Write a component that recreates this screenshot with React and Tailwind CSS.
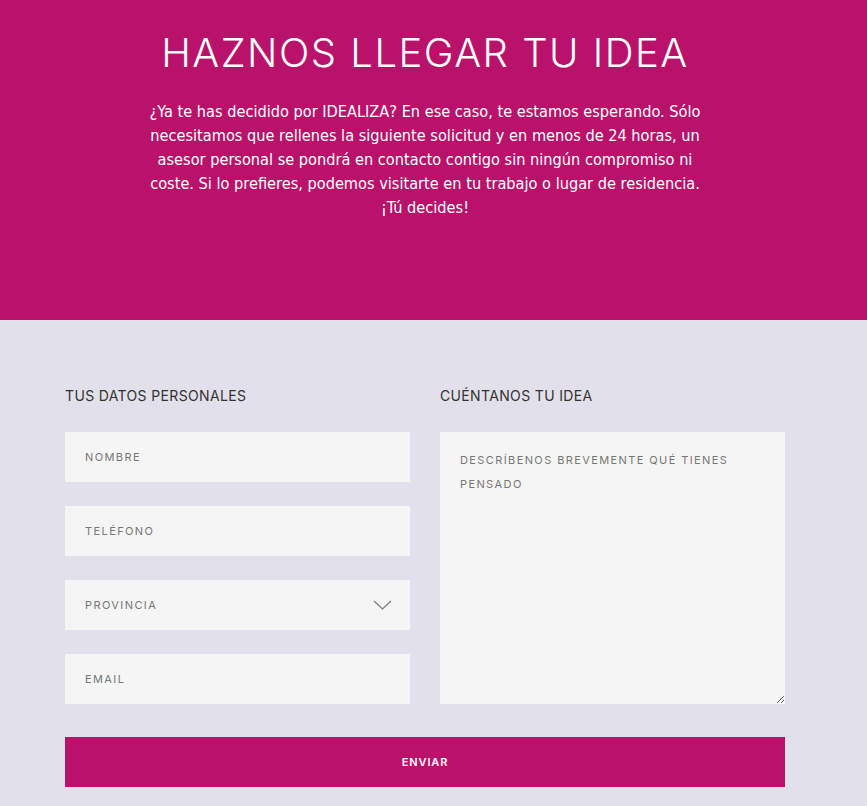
const campos = ['NOMBRE', 'TELÉFONO', 'PROVINCIA', 'EMAIL']

const Chevron = () => (
  <svg width="19" height="10" viewBox="0 0 19 10" fill="none" className="mr-[-2px]">
    <polyline points="1,1 9.5,9 18,1" stroke="#7a7a7a" strokeWidth="1.2" />
  </svg>
)

const App = () => {
  return (
    <div className="min-h-[806px] bg-[#e2e0ea] font-['Inter',sans-serif]">

      {/* Cabecera */}
      <div className="h-[320px] bg-[#b9126a] pt-[31px] text-white">
        <div className="w-[850px] text-center">
          <h1 className="text-[40px] font-light leading-[44px] tracking-[1.5px] font-['Inter',sans-serif]">
            HAZNOS LLEGAR TU IDEA
          </h1>
          <p className="mx-auto mt-[25px] w-[558px] text-[16.2px] leading-[24px] font-['DejaVu_Sans_Condensed','DejaVu_Sans',sans-serif]">
            ¿Ya te has decidido por IDEALIZA? En ese caso, te estamos esperando. Sólo necesitamos
            que rellenes la siguiente solicitud y en menos de 24 horas, un asesor personal se
            pondrá en contacto contigo sin ningún compromiso ni coste. Si lo prefieres, podemos
            visitarte en tu trabajo o lugar de residencia. ¡Tú decides!
          </p>
        </div>
      </div>

      {/* Formulario */}
      <div className="ml-[65px] w-[720px] pt-[66px]">
        <div className="grid grid-cols-2 gap-x-[30px]">
          <div>
            <h2 className="h-[20px] text-[14px] leading-[20px] tracking-[0.35px] text-[#333]">TUS DATOS PERSONALES</h2>
            <div className="mt-[26px] flex flex-col gap-[24px]">
              {campos.map(c => (
                <div key={c} className="flex h-[50px] items-center justify-between bg-[#f5f5f5] pl-[20px] pr-[20px]">
                  <span className="mt-[1px] text-[11px] tracking-[1.4px] text-[#777]">{c}</span>
                  {c === 'PROVINCIA' && <Chevron />}
                </div>
              ))}
            </div>
          </div>
          <div>
            <h2 className="h-[20px] text-[14px] leading-[20px] tracking-[0.35px] text-[#333]">CUÉNTANOS TU IDEA</h2>
            <textarea
              className="mt-[26px] block h-[272px] w-full bg-[#f5f5f5] px-[20px] py-[16px] text-[11px] leading-[24px] tracking-[1.4px] outline-none placeholder:text-[#777]"
              placeholder="DESCRÍBENOS BREVEMENTE QUÉ TIENES PENSADO"
            />
          </div>
        </div>

        <button className="mt-[33px] h-[50px] w-full bg-[#b9126a] text-[11px] font-semibold tracking-[0.9px] text-white">
          ENVIAR
        </button>
      </div>
    </div>
  )
}

export default App
